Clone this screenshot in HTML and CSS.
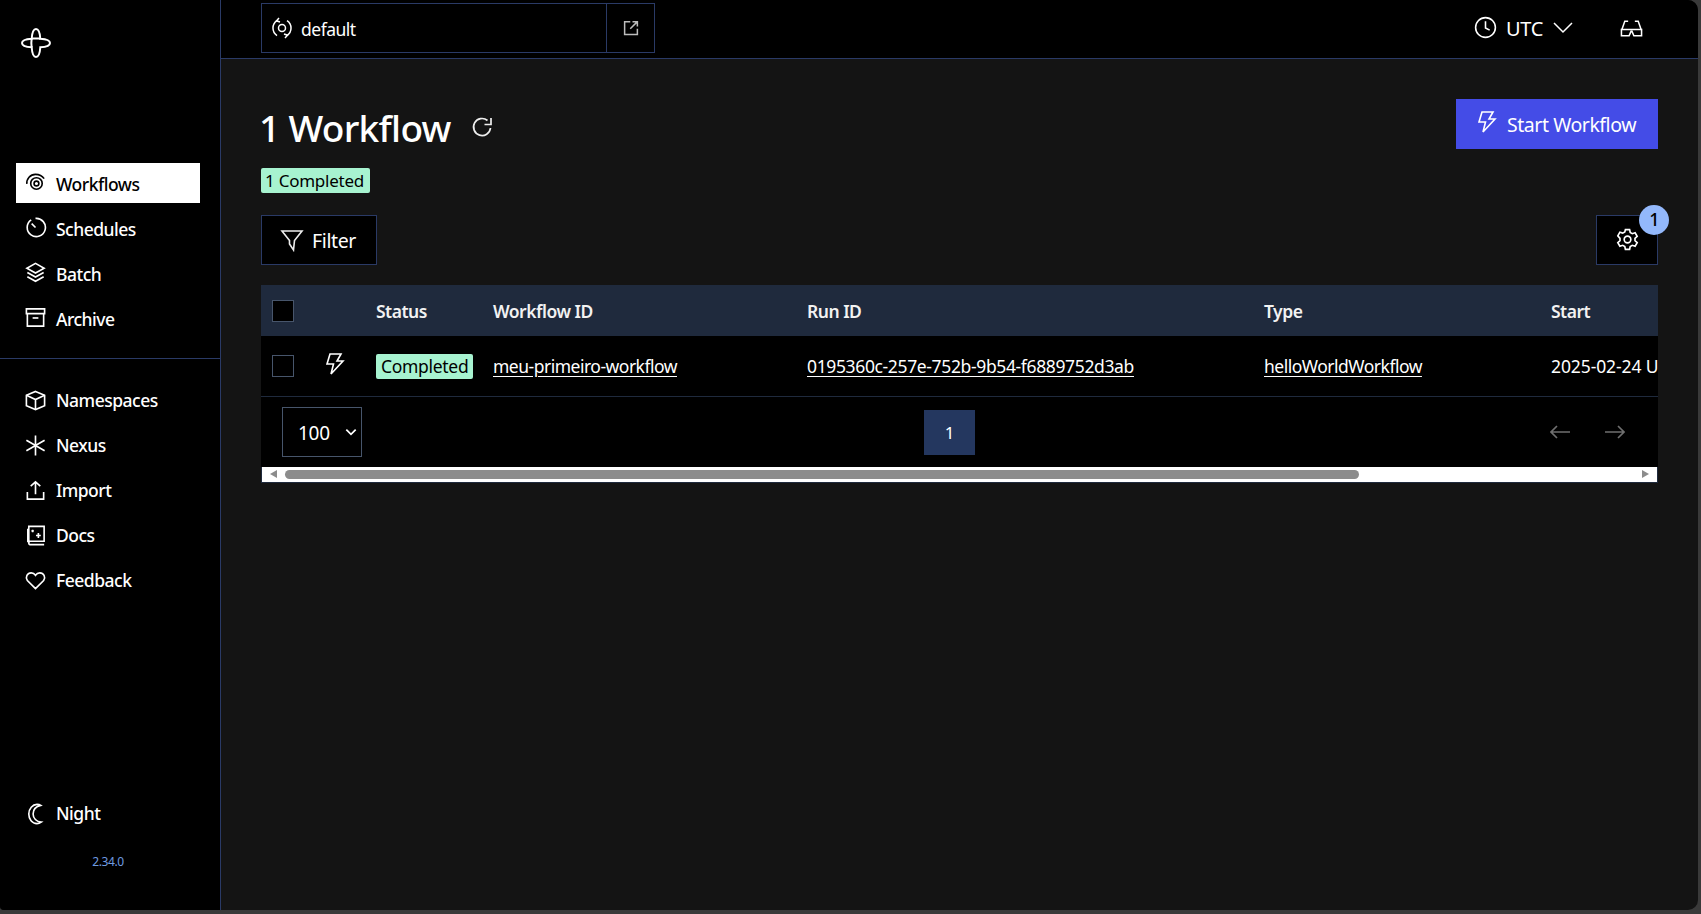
FILE: index.html
```html
<!DOCTYPE html>
<html lang="en">
<head>
<meta charset="utf-8">
<title>Workflows</title>
<link rel="stylesheet" href="styles.css">
</head>
<body>
<div class="app">
  <aside class="sidebar">
    <div class="logo">
      <svg width="32" height="32" viewBox="0 0 32 32" fill="none" stroke="#fff" stroke-width="2.4"><path d="M16 2c3 0 4 5 4.300 9.700C25 12 30 13 30 16s-5 4-9.700 4.300C20 25 19 30 16 30s-4-5-4.300-9.700C7 20 2 19 2 16s5-4 9.700-4.300C12 7 13 2 16 2z"/><path d="M11.700 11.700c-.6 5-.6 4 0 8.600M20.300 11.700c-5-.5-4-.5-8.600 0"/></svg>
    </div>
    <nav class="nav nav-top">
      <a class="item active"><svg class="ico" viewBox="0 0 24 24"><circle cx="13" cy="13" r="2.500"/><circle cx="13" cy="13" r="6"/><path d="M3 13.500A9 9 0 0 1 12 3.500c3.500 0 7 1.500 9 4.500"/></svg>Workflows</a>
      <a class="item"><svg class="ico" viewBox="0 0 24 24"><path d="M7.500 4.100A9.500 9.500 0 1 0 12 2.500"/><path d="M8 8l4 4"/></svg>Schedules</a>
      <a class="item"><svg class="ico" viewBox="0 0 24 24"><path d="M12 2.500l9 5-9 5-9-5z"/><path d="M3.500 12l8.500 4.700 8.500-4.700"/><path d="M3.500 16.500l8.500 4.700 8.500-4.700"/></svg>Batch</a>
      <a class="item"><svg class="ico" viewBox="0 0 24 24"><path d="M2.500 3h19v5h-19z"/><path d="M3.500 8v13h17V8"/><path d="M9 12.500h6"/></svg>Archive</a>
    </nav>
    <div class="rule"></div>
    <nav class="nav">
      <a class="item"><svg class="ico" viewBox="0 0 24 24"><path d="M12 2.500l9.500 4v11l-9.500 4-9.500-4v-11z"/><path d="M2.500 6.500l9.500 4.500 9.500-4.500M12 11v10.500"/></svg>Namespaces</a>
      <a class="item"><svg class="ico" viewBox="0 0 24 24"><path d="M12 1.500v21M2.500 6.500l19 11M21.500 6.500l-19 11"/></svg>Nexus</a>
      <a class="item"><svg class="ico" viewBox="0 0 24 24"><path d="M12 16V3M7 7.500L12 3l5 4.500"/><path d="M3.500 13.500v7.500h17v-7.500"/></svg>Import</a>
      <a class="item"><svg class="ico" viewBox="0 0 24 24"><path d="M5 18V2.500h16V18H6a2 2 0 0 0 0 3.500h15M4 19V5"/><path d="M9 6v2.500M7.800 7.200h2.400M15 9.500v5M12.500 12h5"/></svg>Docs</a>
      <a class="item"><svg class="ico" viewBox="0 0 24 24"><path d="M12 20.500l-8.500-8.500C1 8.500 3.500 4 7.500 4c2.200 0 3.500 1 4.500 2.500C13 5 14.300 4 16.500 4c4 0 6.500 4.500 4 8z"/></svg>Feedback</a>
    </nav>
    <div class="spacer"></div>
    <a class="item"><svg class="ico" viewBox="0 0 24 24"><path d="M17.500 3.500C12.500 4.500 9.500 8 9.500 12.500s3.500 8 8.500 8.500c-1.500 1-3 1.500-4.500 1.500-5 0-8.500-4.500-8.500-10S9 2.500 13.500 2.500c1.500 0 3 .3 4 1z"/></svg>Night</a>
    <div class="version">2.34.0</div>
  </aside>
  <div class="main">
    <header class="topbar">
      <div class="ns-box">
        <div class="ns-name"><svg class="ico-sm" viewBox="0 0 24 24"><circle cx="12" cy="12" r="3.500"/><path d="M7 4.500A9 9 0 0 0 7 19.500M17 4.500a9 9 0 0 1 0 15"/><path d="M9 2L6.500 4.800 10 6M15 22l2.500-2.800L14 18"/></svg>default</div>
        <div class="ns-link"><svg class="ico-xs" viewBox="0 0 24 24"><path d="M11 3.500H3.500v17h17V13"/><path d="M11 13L20.500 3.500M14 3.500h6.500V10"/></svg></div>
      </div>
      <div class="top-right">
        <div class="tz"><svg class="ico-tz" viewBox="0 0 24 24"><circle cx="12" cy="12" r="9.500"/><path d="M12 6v6.500l4 2"/></svg><span>UTC</span><svg class="ico-chev" viewBox="0 0 24 24"><path d="M3 7l9 9 9-9"/></svg></div>
        <svg class="ico-glass" viewBox="0 0 24 24"><path d="M1.500 13h21v6.500h-8L12.500 15h-1l-2 4.500h-8z"/><path d="M2 13L5 4.500h3.500M22 13l-3-8.500h-3.500"/></svg>
      </div>
    </header>
    <main class="content">
      <div class="head-row">
        <div>
          <div class="title-row">
            <h1>1 Workflow</h1>
            <svg class="ico-refresh" viewBox="0 0 24 24"><path d="M20.500 12a8.500 8.500 0 1 1-3-7.500"/><path d="M21 2v6.500h-6.500"/></svg>
          </div>
          <span class="count-badge">1 Completed</span>
        </div>
        <button class="start-btn"><svg class="ico-bolt" viewBox="0 0 24 24"><path d="M8 2h11l-4 7h6L9 22l2.500-10H5z"/></svg>Start Workflow</button>
      </div>
      <div class="filter-row">
        <button class="filter-btn"><svg class="ico-filter" viewBox="0 0 24 24"><path d="M2 3h20l-7.500 9.500L13.500 22 9.500 16V12.500z"/></svg>Filter</button>
        <div class="gear-btn">
          <svg class="ico-gear" viewBox="0 0 24 24"><circle cx="12" cy="12" r="3.200"/><path d="M10 2.500h4l.6 2.800 2 1.100 2.700-.9 2 3.500-2.100 1.900v2.200l2.100 1.900-2 3.500-2.700-.9-2 1.100-.6 2.800h-4l-.6-2.800-2-1.100-2.700.9-2-3.500 2.100-1.900v-2.200L2.700 8.500l2-3.500 2.700.9 2-1.100z"/></svg>
          <span class="gear-badge">1</span>
        </div>
      </div>
      <section class="panel">
        <table class="grid">
          <colgroup><col class="c-check"><col class="c-bolt"><col class="c-status"><col class="c-wid"><col class="c-run"><col class="c-type"><col class="c-start"></colgroup>
          <thead>
            <tr><th><span class="box box-fill"></span></th><th></th><th>Status</th><th>Workflow ID</th><th>Run ID</th><th>Type</th><th>Start</th></tr>
          </thead>
          <tbody>
            <tr>
              <td><span class="box"></span></td>
              <td><svg class="ico-rowbolt" viewBox="0 0 24 24"><path d="M8 2h11l-4 7h6L9 22l2.500-10H5z"/></svg></td>
              <td><span class="status">Completed</span></td>
              <td><a class="link">meu-primeiro-workflow</a></td>
              <td><a class="link link-run">0195360c-257e-752b-9b54-f6889752d3ab</a></td>
              <td><a class="link">helloWorldWorkflow</a></td>
              <td class="clip">2025-02-24 UTC</td>
            </tr>
          </tbody>
        </table>
        <div class="pager">
          <div class="select">100<svg class="ico-selchev" viewBox="0 0 24 24"><path d="M4 8l8 8 8-8"/></svg></div>
          <span class="page">1</span>
          <div class="arrows">
            <svg class="ico-arrow" viewBox="0 0 20 14"><path d="M20 7H1M7 1L1 7l6 6"/></svg>
            <svg class="ico-arrow" viewBox="0 0 20 14"><path d="M0 7h19M13 1l6 6-6 6"/></svg>
          </div>
        </div>
        <div class="scrollbar">
          <span class="sb-left"></span>
          <span class="sb-thumb"></span>
          <span class="sb-right"></span>
        </div>
      </section>
    </main>
  </div>
</div>
</body>
</html>
```

FILE: styles.css
```css
* { box-sizing: border-box; }
html, body { margin: 0; height: 100%; }
body {
  background: #3a3a3a;
  color: #fff;
  font-family: "Noto Sans", "Open Sans", sans-serif;
  overflow: hidden;
}
svg { fill: none; stroke: currentColor; stroke-width: 2; display: block; flex: none; }
.app {
  display: flex;
  width: 1698px;
  height: 910px;
  background: #141414;
  border-radius: 0 10px 10px 4px;
  overflow: hidden;
}
.sidebar {
  width: 221px;
  flex: none;
  background: #000;
  border-right: 1px solid #2a3a66;
  display: flex;
  flex-direction: column;
  padding-top: 27px;
}
.logo { height: 136px; padding-left: 20px; }
.nav { display: flex; flex-direction: column; gap: 5px; }
.item {
  display: flex;
  align-items: center;
  gap: 9px;
  height: 40px;
  margin: 0 20px 0 16px;
  padding-left: 8px;
  font-size: 17.5px;
  font-weight: 500;
  letter-spacing: -0.5px;
  color: #fff;
}
.nav-top .item { padding-top: 2px; }
.nav-top .ico { margin-top: -3px; }
.item.active { background: #fff; color: #000; }
.ico { width: 23px; height: 23px; stroke-width: 1.7; }
.rule { height: 1px; background: #2a3a66; margin: 20px 0 21px; }
.spacer { flex: 1; }
.version {
  margin: 20px 4px 40px 0;
  text-align: center;
  font-size: 12px;
  letter-spacing: -0.4px;
  color: #6f9be0;
}
.main { flex: 1; min-width: 0; display: flex; flex-direction: column; }
.topbar {
  height: 59px;
  flex: none;
  background: #000;
  border-bottom: 1px solid #2a3a66;
  display: flex;
  align-items: flex-start;
  justify-content: space-between;
  padding: 3px 55px 0 40px;
}
.ns-box {
  width: 394px;
  height: 50px;
  border: 1px solid #2a3a66;
  display: flex;
}
.ns-name {
  flex: 1;
  display: flex;
  align-items: center;
  gap: 7px;
  padding: 1px 0 0 8px;
  font-size: 17.5px;
  letter-spacing: -0.5px;
}
.ico-sm { width: 24px; height: 24px; stroke-width: 1.5; margin-top: -1px; }
.ns-link {
  width: 48px;
  border-left: 1px solid #2a3a66;
  display: flex;
  align-items: center;
  justify-content: center;
  color: #bdbdbd;
}
.ico-xs { width: 18px; height: 18px; stroke-width: 2; margin-top: -1px; }
.top-right { display: flex; align-items: center; gap: 45px; height: 50px; }
.tz { display: flex; align-items: center; gap: 8px; font-size: 20px; letter-spacing: -0.3px; }
.ico-tz { width: 25px; height: 25px; stroke-width: 1.5; margin-top: -1px; }
.ico-chev { width: 24px; height: 24px; stroke-width: 1.5; }
.ico-glass { width: 23px; height: 23px; stroke-width: 1.6; }
.content { padding: 40px 40px 0; }
.head-row { display: flex; justify-content: space-between; align-items: flex-start; }
.title-row { display: flex; align-items: center; gap: 19px; height: 56px; }
h1 { margin: 2px 0 0 -2px; font-size: 37px; font-weight: 500; line-height: 48px; letter-spacing: -0.7px; }
.ico-refresh { width: 24px; height: 24px; margin-top: 1px; stroke-width: 1.7; color: #eee; }
.count-badge {
  display: block;
  width: 109px;
  height: 25px;
  margin-top: 13px;
  padding-right: 2px;
  background: #a7f3d0;
  border-radius: 2px;
  color: #000;
  font-size: 17px;
  line-height: 26px;
  letter-spacing: -0.25px;
  text-align: center;
  white-space: nowrap;
}
.start-btn {
  width: 202px;
  height: 50px;
  border: 0;
  padding: 0 0 0 18px;
  background: #444ce7;
  color: #fff;
  display: flex;
  align-items: center;
  gap: 9px;
  font: inherit;
  font-size: 19.5px;
  letter-spacing: -0.45px;
}
.ico-bolt { width: 24px; height: 24px; margin-top: -4px; stroke-width: 1.6; }
.filter-row { display: flex; justify-content: space-between; margin-top: 22px; }
.filter-btn {
  width: 116px;
  height: 50px;
  padding: 0 2px 0 0;
  background: #000;
  border: 1px solid #2a3a66;
  color: #fff;
  display: flex;
  align-items: center;
  justify-content: center;
  gap: 8px;
  font: inherit;
  font-size: 19.5px;
  letter-spacing: -0.4px;
}
.ico-filter { width: 24px; height: 24px; stroke-width: 1.6; color: #eee; }
.gear-btn {
  position: relative;
  width: 62px;
  height: 50px;
  background: #000;
  border: 1px solid #2a3a66;
  display: flex;
  align-items: center;
  justify-content: center;
}
.ico-gear { width: 25px; height: 25px; stroke-width: 1.6; margin-top: -1px; }
.gear-badge {
  position: absolute;
  top: -11px;
  right: -12px;
  width: 30px;
  height: 30px;
  padding-left: 1px;
  border-radius: 50%;
  background: #93b8fb;
  color: #000;
  font-size: 18px;
  font-weight: 500;
  line-height: 29px;
  text-align: center;
}
.panel { margin-top: 20px; width: 1397px; background: #000; }
.grid { width: 1397px; table-layout: fixed; border-collapse: collapse; }
.c-check { width: 53px; }
.c-bolt { width: 62px; }
.c-status { width: 117px; }
.c-wid { width: 314px; }
.c-run { width: 457px; }
.c-type { width: 287px; }
.c-start { width: 107px; }
th {
  height: 51px;
  background: #1f2a3d;
  padding: 0;
  text-align: left;
  font-size: 17.5px;
  font-weight: 600;
  letter-spacing: -0.5px;
  color: #f2f2f2;
}
td {
  height: 60px;
  padding: 0;
  border-bottom: 1px solid #1f2a3d;
  font-size: 17.5px;
  letter-spacing: -0.1px;
  white-space: nowrap;
  overflow: hidden;
}
.box {
  display: block;
  width: 22px;
  height: 22px;
  margin-left: 11px;
  border: 1px solid #47556b;
}
.box-fill { background: #000; }
.ico-rowbolt { width: 24px; height: 24px; margin: -4px 0 0 8px; stroke-width: 1.6; }
.status {
  display: inline-block;
  padding: 0 5px;
  height: 25px;
  margin-top: 2px;
  background: #a7f3d0;
  border-radius: 2px;
  color: #000;
  letter-spacing: -0.3px;
  line-height: 24px;
}
.link { color: #fff; text-decoration: underline; text-underline-offset: 3px; letter-spacing: -0.5px; }
.link-run { letter-spacing: -0.36px; }
.pager {
  position: relative;
  height: 70px;
  display: flex;
  align-items: flex-start;
  justify-content: center;
}
.select {
  position: absolute;
  left: 21px;
  top: 10px;
  width: 80px;
  height: 50px;
  border: 1px solid #47556b;
  display: flex;
  align-items: center;
  padding: 3px 0 0 15px;
  font-size: 19px;
  letter-spacing: -0.3px;
}
.ico-selchev { width: 14px; height: 14px; margin-left: 14px; margin-top: -3px; stroke-width: 3; }
.page {
  width: 51px;
  height: 45px;
  margin-top: 13px;
  margin-right: 20px;
  background: #24375f;
  font-size: 17px;
  line-height: 45px;
  text-align: center;
}
.arrows {
  position: absolute;
  right: 33px;
  top: 28px;
  display: flex;
  gap: 35px;
  color: #6f6f6f;
}
.ico-arrow { width: 20px; height: 14px; stroke-width: 1.7; }
.scrollbar {
  position: relative;
  height: 16px;
  background: #fff;
  border: 1px solid #1f2a3d;
  border-top: 0;
  display: flex;
  align-items: center;
}
.sb-thumb {
  position: absolute;
  left: 23px;
  top: 3px;
  width: 1074px;
  height: 9px;
  background: #8c8c8c;
  border-radius: 5px;
}
.sb-left, .sb-right {
  position: absolute;
  top: 3px;
  width: 0;
  height: 0;
  border-style: solid;
  border-color: transparent;
  border-width: 4.5px 0;
}
.sb-left { left: 8px; border-right: 7px solid #8c8c8c; }
.sb-right { right: 8px; border-left: 7px solid #8c8c8c; }
```
